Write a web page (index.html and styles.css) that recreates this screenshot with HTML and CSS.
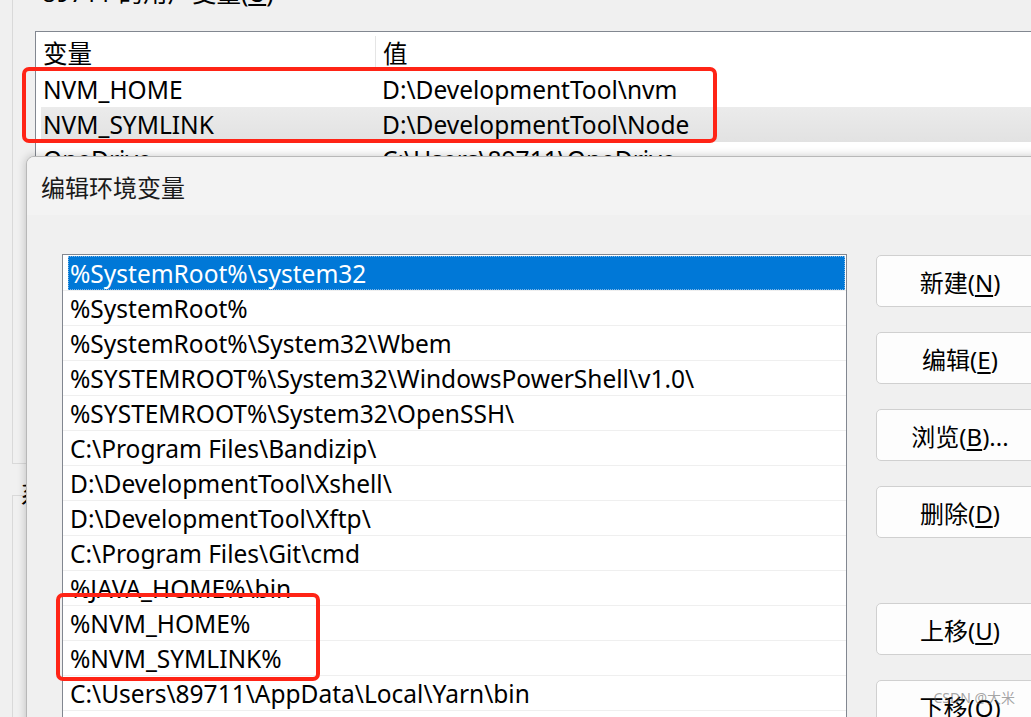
FILE: index.html
```html
<!DOCTYPE html>
<html lang="zh-CN">
<head>
<meta charset="utf-8">
<title>编辑环境变量</title>
<link rel="stylesheet" href="styles.css">
</head>
<body>
<div class="desktop">
  <div class="parent-window">
    <section class="groupbox user-vars">
      <div class="caption">89711 的用户变量(<u>U</u>)</div>
      <div class="listview">
        <div class="lv-head">
          <div class="col c1">变量</div>
          <div class="col c2 sep">值</div>
        </div>
        <div class="lv-row">
          <div class="col c1">NVM_HOME</div>
          <div class="col c2">D:\DevelopmentTool\nvm</div>
        </div>
        <div class="lv-row inactive-sel">
          <div class="col c1">NVM_SYMLINK</div>
          <div class="col c2">D:\DevelopmentTool\Node</div>
        </div>
        <div class="lv-row">
          <div class="col c1">OneDrive</div>
          <div class="col c2">C:\Users\89711\OneDrive</div>
        </div>
      </div>
    </section>
    <section class="groupbox sys-vars">
      <div class="caption">系统变量(<u>S</u>)</div>
    </section>
  </div>

  <div class="dialog">
    <div class="titlebar">编辑环境变量</div>
    <div class="dialog-body">
      <div class="listbox">
        <div class="item selected"><span class="text">%SystemRoot%\system32</span></div>
        <div class="item"><span class="text">%SystemRoot%</span></div>
        <div class="item"><span class="text">%SystemRoot%\System32\Wbem</span></div>
        <div class="item"><span class="text">%SYSTEMROOT%\System32\WindowsPowerShell\v1.0\</span></div>
        <div class="item"><span class="text">%SYSTEMROOT%\System32\OpenSSH\</span></div>
        <div class="item"><span class="text">C:\Program Files\Bandizip\</span></div>
        <div class="item"><span class="text">D:\DevelopmentTool\Xshell\</span></div>
        <div class="item"><span class="text">D:\DevelopmentTool\Xftp\</span></div>
        <div class="item"><span class="text">C:\Program Files\Git\cmd</span></div>
        <div class="item"><span class="text">%JAVA_HOME%\bin</span></div>
        <div class="item"><span class="text">%NVM_HOME%</span></div>
        <div class="item"><span class="text">%NVM_SYMLINK%</span></div>
        <div class="item"><span class="text">C:\Users\89711\AppData\Local\Yarn\bin</span></div>
        <div class="item"><span class="text"></span></div>
      </div>
      <div class="buttons">
        <button class="btn">新建(<u>N</u>)</button>
        <button class="btn">编辑(<u>E</u>)</button>
        <button class="btn">浏览(<u>B</u>)...</button>
        <button class="btn">删除(<u>D</u>)</button>
        <button class="btn gap-before">上移(<u>U</u>)</button>
        <button class="btn">下移(<u>O</u>)</button>
      </div>
    </div>
  </div>

  <div class="mark mark-top"></div>
  <div class="mark mark-bottom"></div>
  <div class="watermark">CSDN @大米</div>
</div>
</body>
</html>
```

FILE: styles.css
```css
* { box-sizing: border-box; }

html, body {
  margin: 0;
  padding: 0;
}

body {
  width: 1031px;
  height: 717px;
  overflow: hidden;
  background: #f0f0f0;
  font-family: "Noto Sans", "Noto Sans CJK SC", sans-serif;
  font-size: 24.5px;
  color: #000;
}

.desktop {
  position: relative;
  width: 1031px;
  height: 717px;
  overflow: hidden;
}

.parent-window {
  display: flex;
  flex-direction: column;
  padding-left: 12px;
}

.groupbox {
  border-left: 1px solid #d9d9d9;
}

.user-vars {
  height: 464px;
  border-bottom: 1px solid #d9d9d9;
  padding-left: 22px;
  width: 1100px;
}

.caption {
  margin-left: 7px;
  line-height: 32px;
  height: 32px;
  white-space: nowrap;
}

.user-vars .caption {
  margin-top: -23px;
  margin-bottom: 22px;
}

.sys-vars {
  margin-top: 31px;
  border-top: 1px solid #d9d9d9;
  height: 300px;
}

.sys-vars .caption {
  margin-top: -17px;
}

.listview {
  background: #fff;
  border-top: 1px solid #828790;
  border-left: 1px solid #828790;
  width: 1100px;
  height: 200px;
}

.lv-head,
.lv-row {
  display: flex;
  white-space: nowrap;
}

.lv-head {
  height: 40px;
  align-items: center;
}

.lv-row {
  height: 35px;
  align-items: center;
  margin-left: 5px;
}

.lv-row .c1 { width: 334px; padding-left: 2px; }
.lv-head .c1 { width: 339px; padding-left: 7px; }

.lv-head .sep {
  border-left: 1px solid #e5e5e5;
  height: 33px;
  display: flex;
  align-items: center;
}

.c2 { padding-left: 7px; }

.inactive-sel {
  background: linear-gradient(#ebebeb, #e2e2e2);
}

.dialog {
  position: absolute;
  left: 26px;
  top: 156px;
  width: 1100px;
  height: 700px;
  background: #f0f0f0;
  border: 1px solid #b8b8b8;
  border-top-left-radius: 8px;
  box-shadow: 0 0 10px rgba(0, 0, 0, 0.22);
  overflow: hidden;
}

.titlebar {
  height: 58px;
  background: #f3f3f3;
  padding-left: 14px;
  display: flex;
  align-items: center;
  font-size: 24px;
  color: #1b1b1b;
}

.dialog-body {
  display: flex;
  align-items: flex-start;
  gap: 29px;
  padding: 39px 0 0 35px;
}

.listbox {
  width: 785px;
  height: 600px;
  background: #fff;
  border: 1px solid #828790;
  padding-top: 1px;
}

.item {
  height: 35px;
  border-bottom: 1px solid #efefef;
  display: flex;
  white-space: nowrap;
}

.item .text {
  display: flex;
  align-items: center;
  padding-left: 7px;
  flex: 1;
}

.item.selected .text {
  margin-left: 5px;
  margin-right: 1px;
  padding-left: 2px;
  background: #0078d7;
  color: #fff;
  outline: 1px dotted #7fb6e6;
  outline-offset: -1px;
}

.buttons {
  display: flex;
  flex-direction: column;
  gap: 25px;
  padding-top: 1px;
}

.btn {
  width: 170px;
  height: 52px;
  background: #fdfdfd;
  border: 1px solid #d0d0d0;
  border-radius: 5px;
  font: inherit;
  font-size: 24px;
  color: #000;
  padding: 0;
  padding-right: 2px;
}

.btn u { text-underline-offset: 3px; }

.gap-before { margin-top: 40px; }

.mark {
  position: absolute;
  border: 4px solid #ff2416;
  border-radius: 7px;
}

.mark-top {
  left: 22px;
  top: 67px;
  width: 695px;
  height: 76px;
}

.mark-bottom {
  left: 56px;
  top: 593px;
  width: 264px;
  height: 88px;
}

.watermark {
  position: absolute;
  right: 16px;
  bottom: 10px;
  font-size: 14px;
  color: rgba(90, 90, 90, 0.55);
  white-space: nowrap;
}
```
